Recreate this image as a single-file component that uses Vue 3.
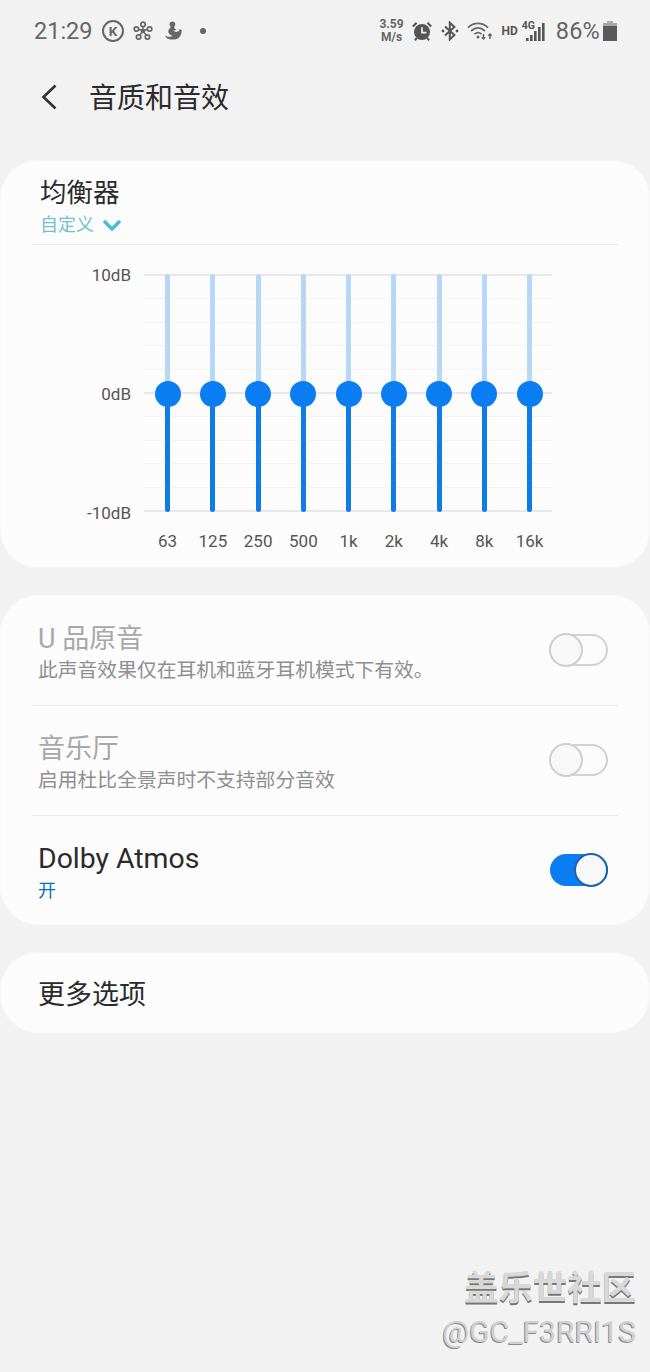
<template>
  <div class="page">
    <div class="status-bar">
      <div class="status-left">
        <span class="time">21:29</span>
        <span class="k-badge">K</span>
        <svg class="ic-net" width="20" height="20" viewBox="0 0 20 20" fill="none" stroke="#666" stroke-width="1.7">
          <path d="M10 10 10 5M10 10 5 8M10 10 15 8M10 10 6 15M10 10 14 15" stroke-width="1.400" />
          <circle cx="10" cy="10" r="2.300" fill="#666" stroke="none" />
          <circle cx="10" cy="3.400" r="2.200" fill="#f2f2f2" />
          <circle cx="3.400" cy="8" r="2.200" fill="#f2f2f2" />
          <circle cx="16.600" cy="8" r="2.200" fill="#f2f2f2" />
          <circle cx="5.600" cy="16" r="2.200" fill="#f2f2f2" />
          <circle cx="14.400" cy="16" r="2.200" fill="#f2f2f2" />
        </svg>
        <svg class="ic-duck" width="18" height="20" viewBox="0 0 18 20" fill="#666">
          <circle cx="7.400" cy="3.200" r="2.800" />
          <path d="M5.600 5.400 9.400 5.400 C8.800 7 9.800 8 11.400 8.600 C10.800 9.600 9.400 10 8.200 9.600 C9.800 11.400 12.400 11.400 14.400 9.600 L13.400 8.400 L16.800 8.800 L16.400 12 C15.400 16.400 12.400 18.600 8 18.600 C3.800 18.600 .6 17.200 .4 14.400 C2.400 15.800 5.800 16 8 15 C4.800 14 2.800 11.800 3.400 9.400 C3.800 7.800 5.600 7.200 5.600 5.400 Z" />
        </svg>
        <span class="dot"></span>
      </div>
      <div class="status-right">
        <div class="speed"><span>3.59</span><span>M/s</span></div>
        <svg class="ic-alarm" width="20" height="20" viewBox="0 0 20 20">
          <circle cx="10" cy="11" r="8" fill="#555" />
          <path d="M10 6.200V11.600H14.400" fill="none" stroke="#f2f2f2" stroke-width="1.700" />
          <path d="M.8 5.400 4.600 1.800M19.200 5.400 15.400 1.800M4.600 17 3 19.400M15.400 17 17 19.400" stroke="#555" stroke-width="2" fill="none" />
        </svg>
        <svg class="ic-bt" width="18" height="20" viewBox="0 0 18 20" fill="none" stroke="#555" stroke-width="2">
          <path d="M4 5.600 13.400 14 8.800 18.400V1.600L13.400 6 4 14.400" />
          <circle cx="2" cy="10" r="1.400" fill="#555" stroke="none" />
          <circle cx="16" cy="10" r="1.400" fill="#555" stroke="none" />
        </svg>
        <svg class="ic-wifi" width="27" height="20" viewBox="0 0 27 20" fill="none" stroke="#666" stroke-width="1.700">
          <path d="M1 6.600C7 1 15 1 21 6.600" />
          <path d="M4 10C8.400 6 13.600 6 18 10" />
          <path d="M7.400 13.200C9.800 11.200 12.200 11.200 14.600 13.200" />
          <circle cx="11" cy="16" r="1.500" fill="#666" stroke="none" />
          <path d="M16.500 13V18M14.800 16.200 16.500 18 18.200 16.200M23 18V13M21.300 14.800 23 13 24.700 14.800" stroke-width="1.500" />
        </svg>
        <span class="hd">HD</span>
        <div class="signal">
          <span class="four-g">4G</span>
          <svg width="23" height="20" viewBox="0 0 23 20" fill="#555">
            <rect x="4" y="17" width="2.600" height="3" />
            <rect x="8" y="14" width="2.600" height="6" />
            <rect x="12" y="10" width="2.600" height="10" />
            <rect x="16" y="6" width="2.600" height="14" />
            <rect x="20" y="2" width="2.600" height="18" />
          </svg>
        </div>
        <span class="percent">86%</span>
        <svg class="ic-batt" width="14" height="20" viewBox="0 0 14 20">
          <rect x="4" y="0" width="6" height="3" fill="#aaa" />
          <rect x="0" y="2" width="14" height="3" fill="#aaa" />
          <rect x="0" y="5" width="14" height="15" fill="#5a5a5a" />
        </svg>
      </div>
    </div>

    <header class="app-bar">
      <svg class="back" width="16" height="26" viewBox="0 0 16 26" fill="none" stroke="#333" stroke-width="2.600">
        <path d="M14.500 1.500 2.500 13 14.500 24.500" />
      </svg>
      <h1>音质和音效</h1>
    </header>

    <section class="card eq-card">
      <div class="eq-head">
        <div class="eq-title">均衡器</div>
        <div class="eq-preset">
          <span>自定义</span>
          <svg width="20" height="12" viewBox="0 0 20 12" fill="none" stroke="#45bcd8" stroke-width="3.400">
            <path d="M2 2 10 10 18 2" />
          </svg>
        </div>
      </div>

      <div class="eq-chart">
        <div class="db-labels">
          <span>10dB</span>
          <span>0dB</span>
          <span>-10dB</span>
        </div>
        <div class="plot-col">
          <div class="plot">
            <div class="grid-lines">
              <i v-for="n in 11" :key="n" :class="{ major: n === 1 || n === 6 || n === 11 }"></i>
            </div>
            <div class="sliders">
              <div v-for="band in bands" :key="band" class="slider">
                <span class="track-top"></span>
                <span class="track-bottom"></span>
                <span class="knob"></span>
              </div>
            </div>
          </div>
          <div class="freqs">
            <span v-for="band in bands" :key="band">{{ band }}</span>
          </div>
        </div>
      </div>
    </section>

    <section class="card list-card">
      <div v-for="item in options" :key="item.title" class="row" :class="{ disabled: item.disabled }">
        <div class="row-text">
          <div class="row-title">{{ item.title }}</div>
          <div class="row-sub" :class="{ active: item.on }">{{ item.sub }}</div>
        </div>
        <div class="switch" :class="{ on: item.on }"><span></span></div>
      </div>
    </section>

    <section class="card more-card">更多选项</section>

    <div class="watermark">
      <div class="wm-cn">盖乐世社区</div>
      <div class="wm-id">@GC_F3RRI1S</div>
    </div>
  </div>
</template>

<script setup>
const bands = ['63', '125', '250', '500', '1k', '2k', '4k', '8k', '16k']

const options = [
  { title: 'U 品原音', sub: '此声音效果仅在耳机和蓝牙耳机模式下有效。', disabled: true, on: false },
  { title: '音乐厅', sub: '启用杜比全景声时不支持部分音效', disabled: true, on: false },
  { title: 'Dolby Atmos', sub: '开', disabled: false, on: true },
]
</script>

<style>
html,
body {
  margin: 0;
  background: #f2f2f2;
}
</style>

<style scoped>
.page {
  position: relative;
  width: 650px;
  height: 1372px;
  overflow: hidden;
  background: #f2f2f2;
  font-family: Roboto, "Noto Sans CJK SC", sans-serif;
  color: #2b2b2b;
}

.status-bar {
  height: 62px;
  display: flex;
  justify-content: space-between;
  align-items: center;
  padding: 0 33px 0 34px;
  color: #666;
}

.status-left,
.status-right {
  display: flex;
  align-items: center;
}

.time {
  font-size: 23.5px;
  width: 68px;
}

.k-badge {
  box-sizing: border-box;
  width: 22px;
  height: 22px;
  border: 2.500px solid #666;
  border-radius: 50%;
  display: flex;
  align-items: center;
  justify-content: center;
  font-size: 13.500px;
  font-weight: 700;
}

.ic-net {
  margin-left: 9px;
}

.ic-duck {
  margin-left: 12px;
}

.dot {
  width: 6px;
  height: 6px;
  border-radius: 50%;
  background: #666;
  margin-left: 17px;
}

.speed {
  display: flex;
  flex-direction: column;
  align-items: center;
  font-size: 12px;
  font-weight: 700;
  line-height: 13px;
  color: #666;
  width: 26px;
}

.ic-alarm {
  margin-left: 8px;
}

.ic-bt {
  margin-left: 9px;
}

.ic-wifi {
  margin-left: 8px;
}

.hd {
  margin-left: 7px;
  font-size: 12px;
  font-weight: 700;
  color: #555;
}

.signal {
  position: relative;
  margin-left: 4px;
  width: 23px;
  height: 20px;
}

.four-g {
  position: absolute;
  top: -1px;
  left: 0;
  font-size: 10.500px;
  line-height: 11px;
  font-weight: 700;
  color: #555;
}

.signal svg {
  display: block;
}

.percent {
  margin-left: 11px;
  font-size: 23.500px;
  letter-spacing: 0.2px;
}

.ic-batt {
  margin-left: 3px;
}

.app-bar {
  height: 70px;
  margin-bottom: 28px;
  display: flex;
  align-items: center;
  padding-left: 41px;
}

.app-bar h1 {
  margin: -2px 0 0 32px;
  font-size: 28px;
  font-weight: 400;
  color: #2b2b2b;
}

.card {
  background: #fcfcfc;
  border-radius: 38px;
  box-shadow: inset 0 0 0 1px #f7f7f7;
}

.eq-card {
  height: 408px;
  margin-bottom: 27px;
  box-sizing: border-box;
  padding: 0 32px;
}

.eq-head {
  height: 85px;
  box-sizing: border-box;
  padding: 15px 0 0 8px;
  border-bottom: 1px solid #ececec;
}

.eq-title {
  font-size: 26.500px;
  line-height: 36px;
  color: #2b2b2b;
}

.eq-preset {
  display: flex;
  align-items: center;
  gap: 8px;
  margin-top: 1px;
  font-size: 18px;
  line-height: 26px;
  color: #74bfd3;
}

.eq-chart {
  display: flex;
  margin-top: 29px;
}

.db-labels {
  width: 99px;
  height: 238px;
  display: flex;
  flex-direction: column;
  justify-content: space-between;
  align-items: flex-end;
  font-size: 17px;
  line-height: 20px;
  color: #555;
}

.db-labels span {
  margin: -9px 0 -11px;
}

.plot-col {
  margin-left: 13px;
  width: 408px;
}

.plot {
  position: relative;
  height: 238px;
}

.grid-lines {
  position: absolute;
  inset: 0;
  display: flex;
  flex-direction: column;
  justify-content: space-between;
}

.grid-lines i {
  display: block;
  height: 1px;
  background: #f5f5f5;
}

.grid-lines i.major {
  height: 2px;
  background: #e6e8ea;
}

.sliders {
  position: absolute;
  inset: 0;
  padding-left: 1px;
  display: grid;
  grid-template-columns: repeat(9, 45.25px);
}

.slider {
  position: relative;
  display: flex;
  flex-direction: column;
  align-items: center;
}

.track-top {
  width: 5px;
  height: 120px;
  background: #b6d7f5;
  border-radius: 3px 3px 0 0;
}

.track-bottom {
  width: 5px;
  flex: 1;
  background: #0f7ce6;
  border-radius: 0 0 3px 3px;
}

.knob {
  position: absolute;
  top: 107px;
  left: 50%;
  width: 26px;
  height: 26px;
  margin-left: -13px;
  border-radius: 50%;
  background: #0a7df2;
}

.freqs {
  padding: 18px 0 0 1px;
  display: grid;
  grid-template-columns: repeat(9, 45.25px);
  font-size: 17px;
  line-height: 22px;
  text-align: center;
  color: #555;
}

.list-card {
  height: 330px;
  margin-bottom: 27px;
  padding: 1px 32px 0;
  box-sizing: border-box;
}

.row {
  height: 110px;
  box-sizing: border-box;
  display: flex;
  align-items: center;
  justify-content: space-between;
  padding: 0 10px 0 6px;
  border-bottom: 1px solid #e9e9e9;
}

.row:last-child {
  border-bottom: none;
}

.row-text {
  display: flex;
  flex-direction: column;
  padding-top: 4px;
}

.row-title {
  font-size: 27px;
  line-height: 36px;
  color: #2b2b2b;
}

.row:last-child .row-title {
  font-size: 28.400px;
}

.row-sub {
  font-size: 19.800px;
  line-height: 28px;
  color: #777;
}

.row-sub.active {
  color: #0a6fc4;
  font-size: 18px;
}

.row.disabled .row-title {
  color: #a8a8a8;
}

.row.disabled .row-sub {
  color: #8f8f8f;
}

.switch {
  position: relative;
  box-sizing: border-box;
  width: 58px;
  height: 32px;
  margin-top: -2px;
  border: 2px solid #d2d2d2;
  border-radius: 16px;
}

.switch span {
  position: absolute;
  box-sizing: border-box;
  top: -3px;
  left: -3px;
  width: 34px;
  height: 34px;
  border: 2px solid #cfcfcf;
  border-radius: 50%;
  background: #f8f8f8;
}

.switch.on {
  border-color: #0a7df2;
  background: #0a7df2;
}

.switch.on span {
  left: auto;
  right: -2px;
  border-color: #1f63a8;
}

.more-card {
  height: 81px;
  padding-left: 38px;
  display: flex;
  align-items: center;
  font-size: 27px;
  color: #2b2b2b;
}

.watermark {
  position: absolute;
  right: 14px;
  top: 1266px;
  text-align: right;
}

.wm-cn {
  font-size: 34.400px;
  line-height: 44px;
  font-weight: 700;
  color: #d8d8d8;
  text-shadow: 0 2px 0 #777;
}

.wm-id {
  font-size: 30px;
  line-height: 44px;
  color: #d0d0d0;
  text-shadow: -1px 1px 0 #8a8a8a;
}
</style>
